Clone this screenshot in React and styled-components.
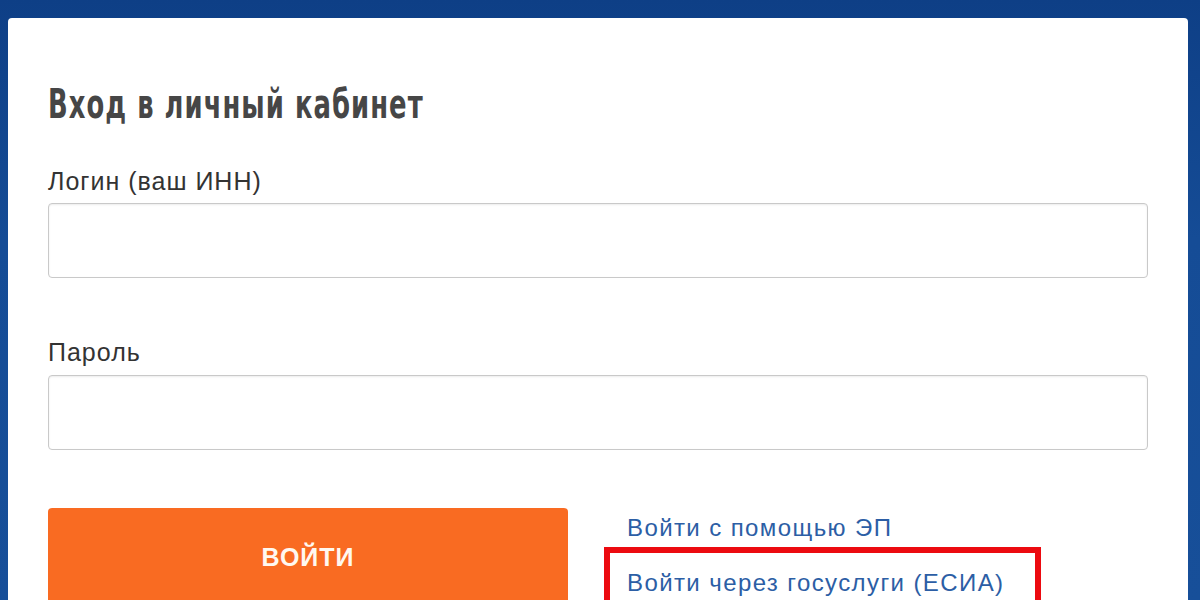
import React from "react";
import styled, { createGlobalStyle } from "styled-components";

const Global = createGlobalStyle`
  html, body { margin: 0; padding: 0; }
  body {
    background: linear-gradient(180deg, #0e3f86 0%, #154c96 40%, #174f99 100%);
    height: 600px;
    overflow: hidden;
    font-family: "Liberation Sans", Arial, sans-serif;
  }
`;

const Page = styled.div`
  padding: 18px 12px 0 8px;
  height: 600px;
  box-sizing: border-box;
  overflow: hidden;
`;

const Card = styled.div`
  background: #ffffff;
  border-radius: 4px 4px 0 0;
  padding: 62px 40px 0 40px;
  height: 620px;
  box-sizing: border-box;
`;

const Heading = styled.h1`
  margin: 0 0 39px 0;
  font-family: "DejaVu Sans Condensed", "DejaVu Sans", sans-serif;
  font-weight: 700;
  font-size: 41px;
  line-height: 48px;
  color: #464646;
  letter-spacing: 1.5px;
  white-space: nowrap;
  transform: scaleX(0.7);
  transform-origin: left center;
`;

const Field = styled.div`
  display: flex;
  flex-direction: column;
  margin-bottom: ${(p) => p.$gap}px;
`;

const Label = styled.label`
  font-size: 25px;
  line-height: 28px;
  letter-spacing: 1px;
  color: #333333;
  margin-bottom: ${(p) => p.$gap}px;
`;

const Input = styled.input`
  height: 75px;
  box-sizing: border-box;
  width: 100%;
  border: 1px solid #c9c9c9;
  border-radius: 4px;
  box-shadow: inset 0 1px 2px rgba(0, 0, 0, 0.08);
  font-size: 24px;
  padding: 0 16px;
  outline: none;
  background: #fff;
`;

const Actions = styled.div`
  display: flex;
  align-items: flex-start;
`;

const Submit = styled.button`
  width: 520px;
  height: 98px;
  flex: none;
  border: none;
  border-radius: 4px;
  background: #f96b22;
  color: #fff8f0;
  font-family: "Liberation Sans", Arial, sans-serif;
  font-weight: 700;
  font-size: 25px;
  letter-spacing: 1px;
  padding: 0;
  cursor: pointer;
`;

const Links = styled.div`
  display: flex;
  flex-direction: column;
  margin-left: 36px;
  padding-top: 6px;
`;

const LinkRow = styled.div`
  padding-left: ${(p) => p.$indent}px;
`;

const Link = styled.a`
  font-size: 24px;
  line-height: 28px;
  letter-spacing: 1.4px;
  color: #2c5ea5;
  text-decoration: none;
  white-space: nowrap;
`;

const Highlight = styled.div`
  margin-top: 5px;
  border: 6px solid #ec0a10;
  border-bottom: none;
  padding: 16px 31px 20px 17px;
`;

export default function App() {
  return (
    <>
      <Global />
      <Page>
        <Card>
          <Heading>Вход в личный кабинет</Heading>
          <Field $gap={60}>
            <Label $gap={8}>Логин (ваш ИНН)</Label>
            <Input type="text" />
          </Field>
          <Field $gap={58}>
            <Label $gap={9}>Пароль</Label>
            <Input type="password" />
          </Field>
          <Actions>
            <Submit>ВОЙТИ</Submit>
            <Links>
              <LinkRow $indent={23}>
                <Link href="#">Войти с помощью ЭП</Link>
              </LinkRow>
              <Highlight>
                <Link href="#">Войти через госуслуги (ЕСИА)</Link>
              </Highlight>
            </Links>
          </Actions>
        </Card>
      </Page>
    </>
  );
}
